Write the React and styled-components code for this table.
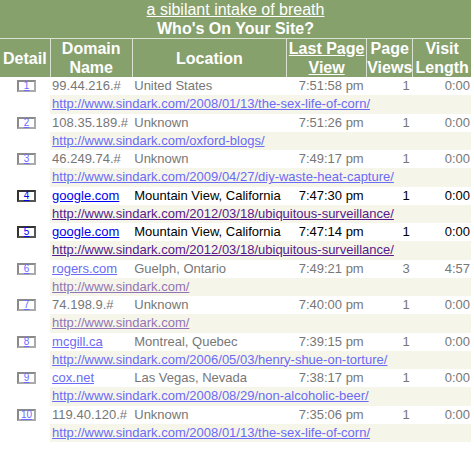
import styled, {createGlobalStyle} from "styled-components";

const GlobalStyle = createGlobalStyle`
    body {
        margin: 0;
        background: #fff;
        font-family: "Liberation Sans", Arial, sans-serif;
    }
`;

const visits = [
    {ip: "99.44.216.#", place: "United States", time: "7:51:58 pm", views: 1, length: "0:00", url: "http://www.sindark.com/2008/01/13/the-sex-life-of-corn/"},
    {ip: "108.35.189.#", place: "Unknown", time: "7:51:26 pm", views: 1, length: "0:00", url: "http://www.sindark.com/oxford-blogs/"},
    {ip: "46.249.74.#", place: "Unknown", time: "7:49:17 pm", views: 1, length: "0:00", url: "http://www.sindark.com/2009/04/27/diy-waste-heat-capture/"},
    {host: "google.com", place: "Mountain View, California", time: "7:47:30 pm", views: 1, length: "0:00", url: "http://www.sindark.com/2012/03/18/ubiquitous-surveillance/", active: true, visited: true},
    {host: "google.com", place: "Mountain View, California", time: "7:47:14 pm", views: 1, length: "0:00", url: "http://www.sindark.com/2012/03/18/ubiquitous-surveillance/", active: true, visited: true},
    {host: "rogers.com", place: "Guelph, Ontario", time: "7:49:21 pm", views: 3, length: "4:57", url: "http://www.sindark.com/", visited: true},
    {ip: "74.198.9.#", place: "Unknown", time: "7:40:00 pm", views: 1, length: "0:00", url: "http://www.sindark.com/", visited: true},
    {host: "mcgill.ca", place: "Montreal, Quebec", time: "7:39:15 pm", views: 1, length: "0:00", url: "http://www.sindark.com/2006/05/03/henry-shue-on-torture/"},
    {host: "cox.net", place: "Las Vegas, Nevada", time: "7:38:17 pm", views: 1, length: "0:00", url: "http://www.sindark.com/2008/08/29/non-alcoholic-beer/"},
    {ip: "119.40.120.#", place: "Unknown", time: "7:35:06 pm", views: 1, length: "0:00", url: "http://www.sindark.com/2008/01/13/the-sex-life-of-corn/"},
];

export default function App() {
    return (
        <>
            <GlobalStyle/>
            <Table>
                <colgroup>
                    <col style={{width: 50}}/>
                    <col style={{width: 82}}/>
                    <col style={{width: 154}}/>
                    <col style={{width: 80}}/>
                    <col style={{width: 46}}/>
                    <col style={{width: 58}}/>
                </colgroup>
                <thead>
                    <tr>
                        <Title colSpan={6}><TitleLink>a sibilant intake of breath</TitleLink></Title>
                    </tr>
                    <tr>
                        <SubTitle colSpan={6}>Who's On Your Site?</SubTitle>
                    </tr>
                    <tr>
                        <Head $first>Detail</Head>
                        <Head>Domain<br/>Name</Head>
                        <Head>Location</Head>
                        <Head><HeadLink>Last Page<br/>View</HeadLink></Head>
                        <Head>Page<br/>Views</Head>
                        <Head>Visit<br/>Length</Head>
                    </tr>
                </thead>
                <tbody>
                    {visits.map((v, i) => (
                        <Visit key={i} n={i + 1} v={v}/>
                    ))}
                </tbody>
            </Table>
        </>
    );
}

function Visit({n, v}) {
    return (
        <>
            <MainRow $active={v.active}>
                <DetailCell><DetailBtn $active={v.active}>{n}</DetailBtn></DetailCell>
                <Cell>{v.host ? <Link $active={v.active}>{v.host}</Link> : v.ip}</Cell>
                <Cell>{v.place}</Cell>
                <Cell $right>{v.time}</Cell>
                <Cell $right>{v.views}</Cell>
                <Cell $right $last>{v.length}</Cell>
            </MainRow>
            <UrlRow>
                <td/>
                <UrlCell colSpan={5}>
                    <Link $active={v.active} $visited={v.visited}>{v.url}</Link>
                </UrlCell>
            </UrlRow>
        </>
    );
}

const Table = styled.table`
    width: 471px;
    table-layout: fixed;
    border-collapse: collapse;
    border-spacing: 0;
    font-size: 13px;
`;

const Title = styled.th`
    background: #87a16d;
    color: #fff;
    height: 20px;
    padding: 0;
    font-size: 16px;
    font-weight: normal;
    line-height: 18px;
    text-align: center;
`;

const TitleLink = styled.span`
    text-decoration: underline;
`;

const SubTitle = styled(Title)`
    height: 18px;
    font-weight: bold;
    line-height: 18px;
    vertical-align: top;
`;

const Head = styled.th`
    background: #87a16d;
    color: #fff;
    height: 38px;
    padding: 0;
    font-size: 16px;
    font-weight: bold;
    line-height: 19px;
    text-align: center;
    vertical-align: middle;
    border-top: 1px solid #d9e1d0;
    border-left: ${p => p.$first ? "none" : "1px solid #d9e1d0"};
    white-space: nowrap;
`;

const HeadLink = styled.span`
    text-decoration: underline;
`;

const MainRow = styled.tr`
    height: 18px;
    background: #fff;
    color: ${p => p.$active ? "#000" : "#777"};
`;

const Cell = styled.td`
    padding: 0 ${p => p.$last ? "1px" : "3px"} 0 2px;
    text-align: ${p => p.$right ? "right" : "left"};
    white-space: nowrap;
    overflow: hidden;
    line-height: 18px;
`;

const DetailCell = styled.td`
    padding: 0;
    text-align: center;
    line-height: 0;
`;

const DetailBtn = styled.span`
    display: inline-block;
    box-sizing: border-box;
    width: 19px;
    height: 12px;
    border: 2px solid ${p => p.$active ? "#333" : "#8a8a8a"};
    border-right-color: ${p => p.$active ? "#555" : "#aaa"};
    border-bottom-color: ${p => p.$active ? "#555" : "#aaa"};
    background: #fff;
    color: ${p => p.$active ? "#00e" : "#6b6bff"};
    font-size: 10px;
    line-height: 8px;
    text-align: center;
    text-decoration: underline;
    margin-left: 3px;
`;

const UrlRow = styled.tr`
    height: 18.5px;
`;

const UrlCell = styled.td`
    background: #f6f5ea;
    padding: 0 2px;
    white-space: nowrap;
    overflow: hidden;
    line-height: 18px;
`;

const Link = styled.span`
    text-decoration: underline;
    color: ${p => p.$visited
        ? (p.$active ? "#551a8b" : "#9274b5")
        : (p.$active ? "#0000ee" : "#6b6bf5")};
    cursor: pointer;
`;
